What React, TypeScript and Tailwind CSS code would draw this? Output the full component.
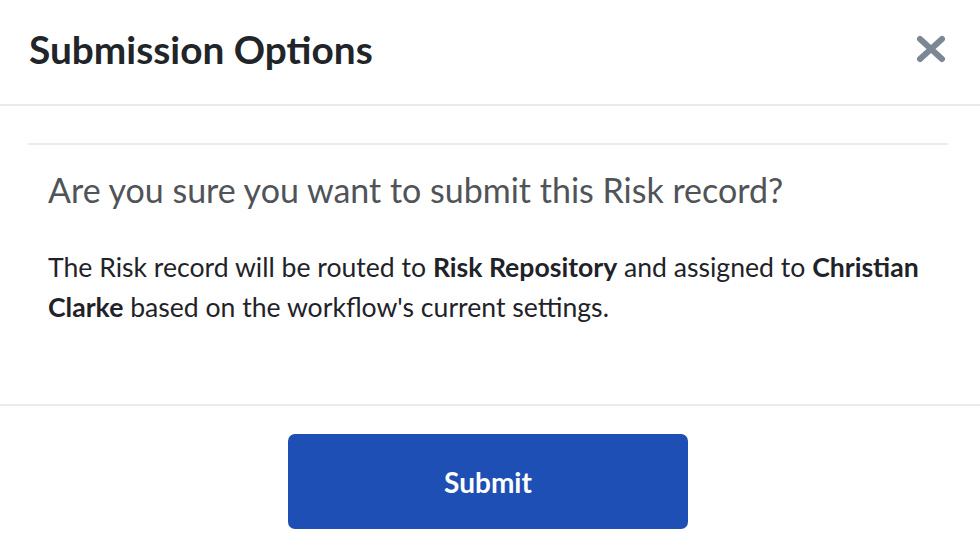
export default function App() {
  return (
    <div className="w-[980px] h-[550px] bg-white font-['Lato',sans-serif] overflow-hidden">
      <div className="flex items-center justify-between h-[106px] pl-[29px] pr-[34px] border-b-2 border-[#e9ecef]">
        <h1 className="text-[38.8px] font-bold text-[#212529] leading-[48px] pb-[7px]">Submission Options</h1>
        <button aria-label="Close" className="text-[#7b8793] pb-[6px]">
          <svg width="30" height="28" viewBox="0 0 30 28">
            <path d="M4 4 L26 24 M26 4 L4 24" stroke="currentColor" strokeWidth="6" strokeLinecap="round" />
          </svg>
        </button>
      </div>
      <div className="px-[28px] pt-[37px] h-[298px]">
        <div className="border-t-2 border-[#e9ecef] w-[920px]" />
        <div className="px-[20px] pt-[25px]">
          <h2 className="text-[34px] text-[#505459] leading-[40px]">Are you sure you want to submit this Risk record?</h2>
          <p className="mt-[37px] text-[26.6px] leading-[40px] text-[#1f2329]">
            The Risk record will be routed to <b>Risk Repository</b> and assigned to <b>Christian Clarke</b> based on the workflow's current settings.
          </p>
        </div>
      </div>
      <div className="border-t-2 border-[#e9ecef] flex justify-center pt-[28px] pr-[4px]">
        <button className="w-[400px] h-[95px] rounded-[7px] bg-[#1e4fb4] text-white text-[28px] font-bold">Submit</button>
      </div>
    </div>
  );
}
